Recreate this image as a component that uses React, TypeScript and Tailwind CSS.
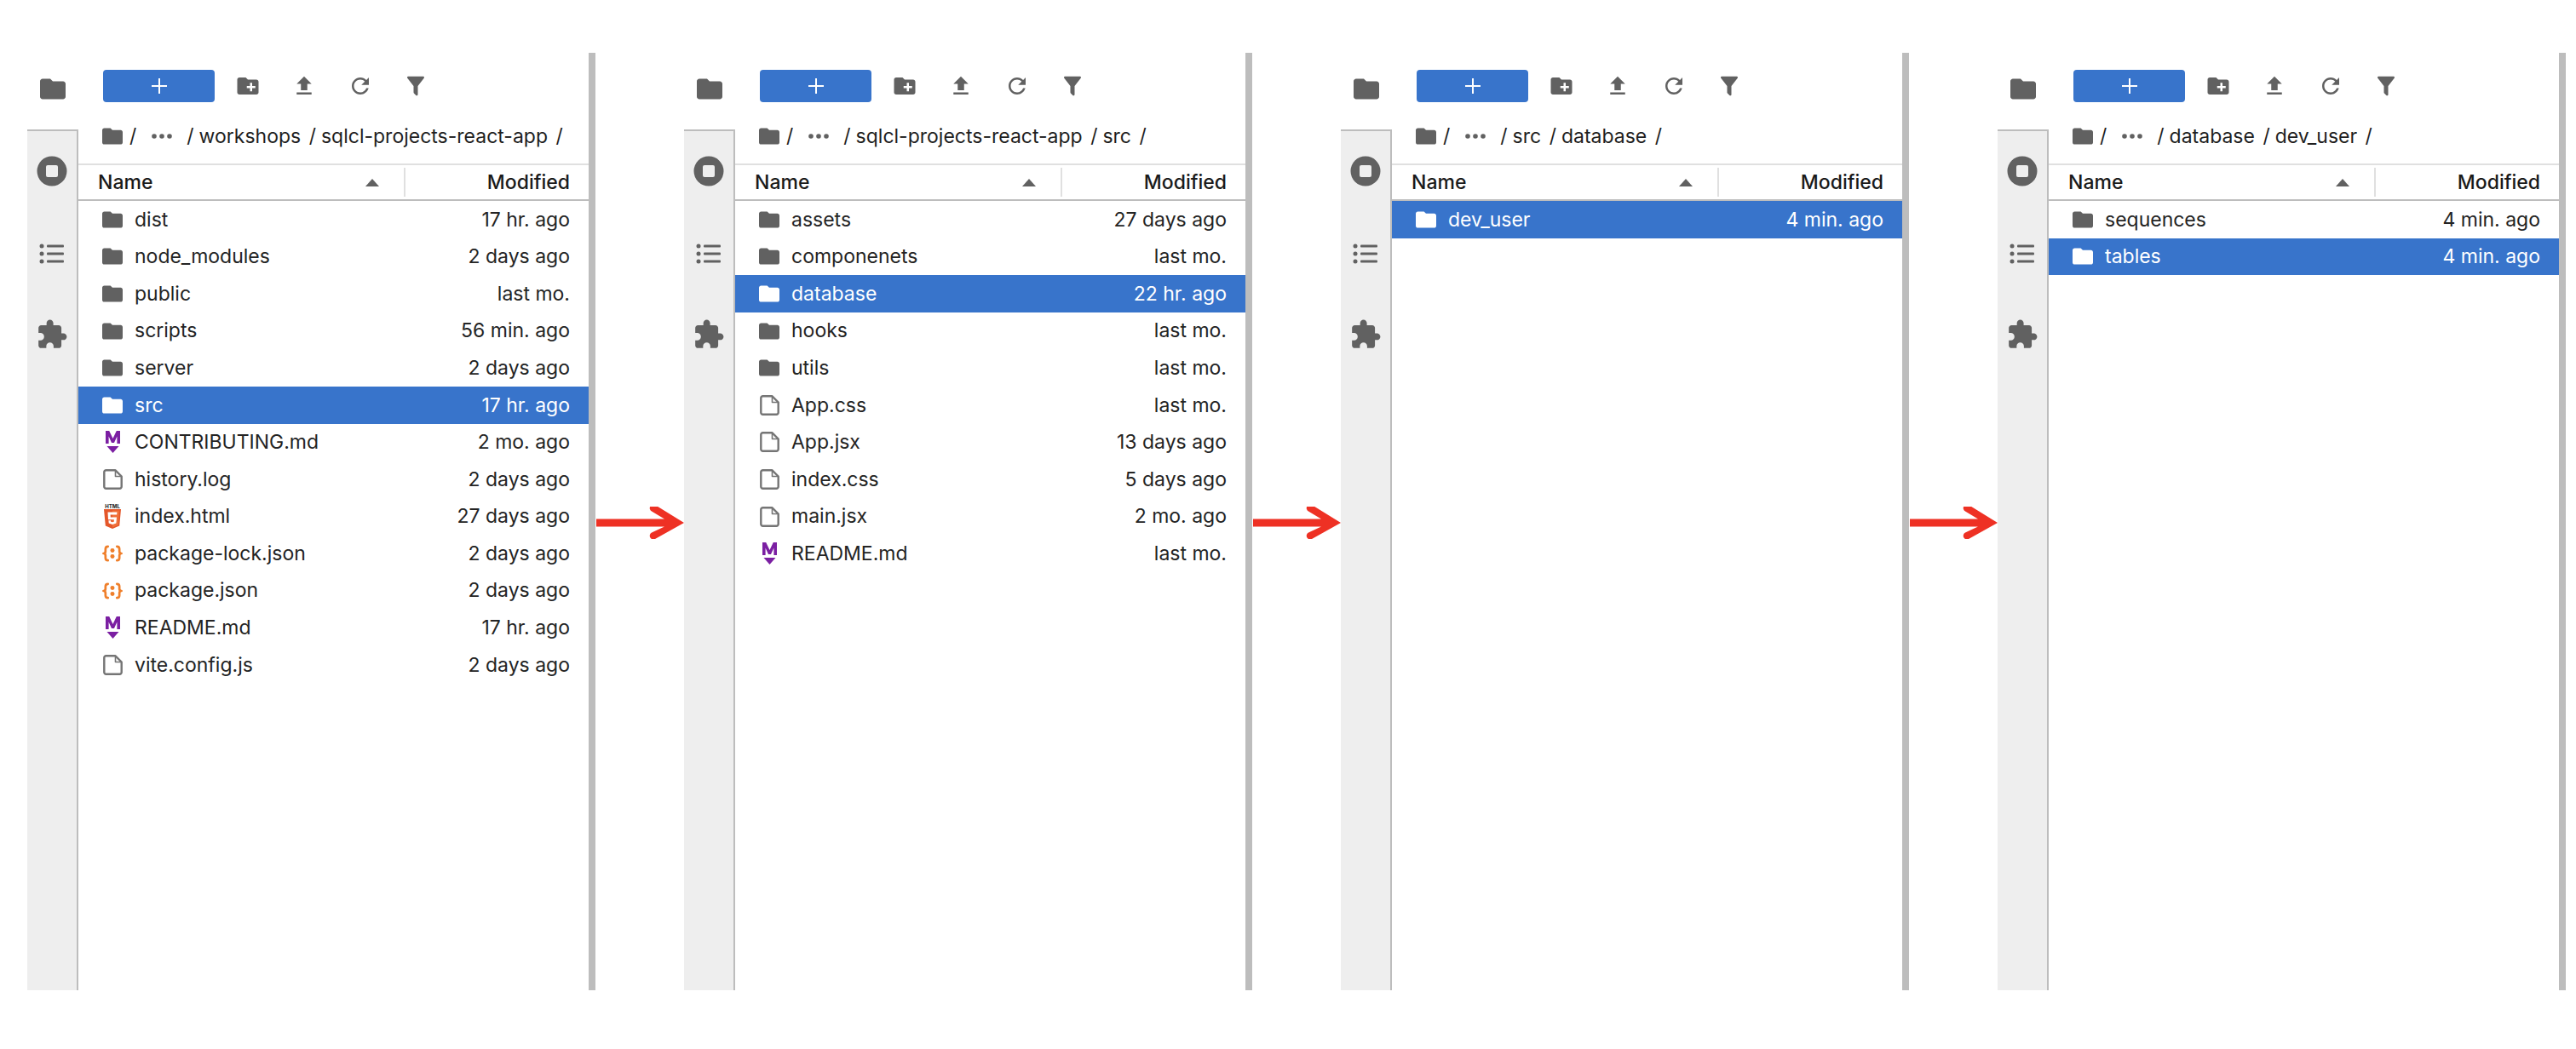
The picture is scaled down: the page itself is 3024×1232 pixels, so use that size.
import React from "react";

type Kind = "folder" | "file" | "md" | "html" | "json";
type Row = { name: string; modified: string; kind: Kind; selected?: boolean };
type Panel = { crumbs: string[]; rows: Row[] };

const panels: Panel[] = [
  {
    crumbs: ["workshops", "sqlcl-projects-react-app"],
    rows: [
      { name: "dist", modified: "17 hr. ago", kind: "folder" },
      { name: "node_modules", modified: "2 days ago", kind: "folder" },
      { name: "public", modified: "last mo.", kind: "folder" },
      { name: "scripts", modified: "56 min. ago", kind: "folder" },
      { name: "server", modified: "2 days ago", kind: "folder" },
      { name: "src", modified: "17 hr. ago", kind: "folder", selected: true },
      { name: "CONTRIBUTING.md", modified: "2 mo. ago", kind: "md" },
      { name: "history.log", modified: "2 days ago", kind: "file" },
      { name: "index.html", modified: "27 days ago", kind: "html" },
      { name: "package-lock.json", modified: "2 days ago", kind: "json" },
      { name: "package.json", modified: "2 days ago", kind: "json" },
      { name: "README.md", modified: "17 hr. ago", kind: "md" },
      { name: "vite.config.js", modified: "2 days ago", kind: "file" },
    ],
  },
  {
    crumbs: ["sqlcl-projects-react-app", "src"],
    rows: [
      { name: "assets", modified: "27 days ago", kind: "folder" },
      { name: "componenets", modified: "last mo.", kind: "folder" },
      { name: "database", modified: "22 hr. ago", kind: "folder", selected: true },
      { name: "hooks", modified: "last mo.", kind: "folder" },
      { name: "utils", modified: "last mo.", kind: "folder" },
      { name: "App.css", modified: "last mo.", kind: "file" },
      { name: "App.jsx", modified: "13 days ago", kind: "file" },
      { name: "index.css", modified: "5 days ago", kind: "file" },
      { name: "main.jsx", modified: "2 mo. ago", kind: "file" },
      { name: "README.md", modified: "last mo.", kind: "md" },
    ],
  },
  {
    crumbs: ["src", "database"],
    rows: [{ name: "dev_user", modified: "4 min. ago", kind: "folder", selected: true }],
  },
  {
    crumbs: ["database", "dev_user"],
    rows: [
      { name: "sequences", modified: "4 min. ago", kind: "folder" },
      { name: "tables", modified: "4 min. ago", kind: "folder", selected: true },
    ],
  },
];

const FOLDER = "M10 4H4c-1.1 0-2 .9-2 2v12c0 1.1.9 2 2 2h16c1.1 0 2-.9 2-2V8c0-1.1-.9-2-2-2h-8l-2-2z";

const FolderIcon = ({ className }: { className: string }) => (
  <svg viewBox="2 4 20 16" className={className} fill="currentColor">
    <path d={FOLDER} />
  </svg>
);

const FileKindIcon = ({ kind, selected }: { kind: Kind; selected?: boolean }) => {
  if (kind === "folder") {
    return <FolderIcon className={`h-5 w-6 ${selected ? "text-white" : "text-[#616161]"}`} />;
  }
  if (kind === "file") {
    return (
      <svg viewBox="0 0 23 24" className="h-6 w-[23px] text-[#757575]" fill="none" stroke="currentColor" strokeWidth="2.4" strokeLinejoin="round">
        <path d="M3.500 1.300H14.500L21.700 8.500V20.500a2.200 2.200 0 0 1-2.200 2.200H3.500a2.200 2.200 0 0 1-2.200-2.200V3.500a2.200 2.200 0 0 1 2.200-2.200z" />
        <path d="M14.500 1.300V8.500H21.700" strokeWidth="1.600" />
      </svg>
    );
  }
  if (kind === "md") {
    return (
      <svg viewBox="0 0 17 26" className="h-[26px] w-[17px] text-[#7B1FA2]" fill="currentColor">
        <path d="M0 0h4.200L8.500 9 12.800 0H17v15h-3.600V6.500L10 14H7L3.600 6.500V15H0z" />
        <path d="M1.500 18h14L8.500 26z" />
      </svg>
    );
  }
  if (kind === "html") {
    return (
      <svg viewBox="0 0 20 29" className="h-[29px] w-5">
        <text x="10" y="4.600" textAnchor="middle" fontSize="6" fontWeight="800" fontFamily="Inter, sans-serif" fill="#333">
          HTML
        </text>
        <path d="M0 6h20l-1.800 19.500L10 29l-8.200-3.500z" fill="#E4572A" />
        <path d="M10 7.500h8.300l-1.500 17L10 27.400z" fill="#F0703A" />
        <path d="M4.500 9.500h11l-.3 3H7.600l.2 3h7.200l-.6 7L10 24l-4.300-1.500-.3-3.300h2.700l.1 1.500 1.800.5 1.800-.5.2-2.400H5z" fill="#fff" />
      </svg>
    );
  }
  return (
    <svg viewBox="0 0 25 20" className="h-5 w-[25px] text-[#EF7F2B]" fill="none" stroke="currentColor" strokeWidth="2.800" strokeLinecap="round" strokeLinejoin="round">
      <path d="M7 1.500C4.500 1.500 4 2.500 4 4.500v3c0 1.500-.8 2.500-2.500 2.500C3.200 10 4 11 4 12.500v3c0 2 .5 3 3 3" />
      <path d="M18 1.500c2.500 0 3 1 3 3v3c0 1.500.8 2.500 2.500 2.500-1.700 0-2.500 1-2.500 2.500v3c0 2-.5 3-3 3" />
      <circle cx="12.500" cy="6.300" r="2.600" fill="currentColor" stroke="none" />
      <circle cx="12.500" cy="13.700" r="2.600" fill="currentColor" stroke="none" />
    </svg>
  );
};

const ToolIcon = ({ d, className }: { d: string; className: string }) => (
  <svg viewBox="0 0 24 24" className={className} fill="#616161">
    <path d={d} />
  </svg>
);

const FilePanel = ({ panel }: { panel: Panel }) => (
  <div className="flex h-full w-[667px] shrink-0">
    {/* Left rail */}
    <div className="flex w-[60px] shrink-0 flex-col">
      <div className="flex h-[90px] items-start justify-center pt-[30px]">
        <FolderIcon className="h-[25px] w-[30px] text-[#616161]" />
      </div>
      <div className="flex flex-1 flex-col items-center border-t-2 border-r-2 border-[#bdbdbd] bg-[#eeeeee]">
        <svg viewBox="0 0 36 36" className="mt-[29px] size-9" fill="#616161" fillRule="evenodd">
          <path d="M18 .500a17.500 17.500 0 1 0 0 35 17.500 17.500 0 0 0 0-35zM13 11h10a2 2 0 0 1 2 2v10a2 2 0 0 1-2 2H13a2 2 0 0 1-2-2V13a2 2 0 0 1 2-2z" />
        </svg>
        <svg viewBox="0 0 30 24" className="mt-[67px] h-6 w-[30px]" fill="#616161">
          <circle cx="3" cy="3" r="2.500" />
          <circle cx="3" cy="12" r="2.500" />
          <circle cx="3" cy="21" r="2.500" />
          <rect x="9" y="1.500" width="20" height="3" rx="1" />
          <rect x="9" y="10.500" width="20" height="3" rx="1" />
          <rect x="9" y="19.500" width="20" height="3" rx="1" />
        </svg>
        <svg viewBox="0 0 24 24" className="mt-[64px] size-[38px]" fill="#616161">
          <path d="M20.500 11H19V7c0-1.100-.9-2-2-2h-4V3.500C13 2.120 11.880 1 10.500 1S8 2.120 8 3.500V5H4c-1.100 0-1.990.9-1.990 2v3.800H3.500c1.490 0 2.700 1.210 2.700 2.700s-1.210 2.700-2.700 2.700H2V20c0 1.100.9 2 2 2h3.800v-1.500c0-1.490 1.210-2.700 2.700-2.700 1.490 0 2.700 1.210 2.700 2.700V22H17c1.100 0 2-.9 2-2v-4h1.500c1.380 0 2.500-1.120 2.500-2.500S21.880 11 20.500 11z" />
        </svg>
      </div>
    </div>

    {/* Browser */}
    <div className="flex min-w-0 flex-1 flex-col">
      <div className="flex h-[78px] items-start pl-[29px] pt-5">
        <div className="flex h-[38px] w-[131px] items-center justify-center rounded-[4px] bg-[#3874CB]">
          <svg viewBox="0 0 18 18" className="size-[18px]" stroke="#fff" strokeWidth="2">
            <path d="M9 0v18M0 9h18" />
          </svg>
        </div>
        <ToolIcon className="ml-[24px] mt-[4px] size-[30px]" d="M20 6h-8l-2-2H4c-1.110 0-1.990.89-1.990 2L2 18c0 1.110.89 2 2 2h16c1.110 0 2-.89 2-2V8c0-1.110-.89-2-2-2zm-1 8h-3v3h-2v-3h-3v-2h3V9h2v3h3v2z" />
        <ToolIcon className="ml-[36px] mt-[4px] size-[30px]" d="M9 16h6v-6h4l-7-7-7 7h4zm-4 2h14v2H5z" />
        <ToolIcon className="ml-[36px] mt-[4px] size-[30px]" d="M17.650 6.350C16.200 4.900 14.210 4 12 4c-4.420 0-7.990 3.580-7.990 8s3.570 8 7.990 8c3.730 0 6.840-2.550 7.730-6h-2.080c-.82 2.330-3.040 4-5.650 4-3.310 0-6-2.690-6-6s2.690-6 6-6c1.660 0 3.140.69 4.220 1.780L13 11h7V4l-2.350 2.350z" />
        <ToolIcon className="ml-[35px] mt-[4px] size-[30px]" d="M14,12V19.880C14.040,20.180 13.940,20.500 13.710,20.710C13.320,21.100 12.690,21.100 12.300,20.710L10.290,18.700C10.060,18.470 9.960,18.160 10,17.870V12H9.970L4.210,4.620C3.870,4.190 3.950,3.560 4.380,3.220C4.570,3.080 4.780,3 5,3V3H19V3C19.220,3 19.430,3.080 19.620,3.220C20.050,3.560 20.130,4.190 19.790,4.620L14.030,12H14Z" />
      </div>

      {/* Breadcrumbs */}
      <div className="flex h-10 items-center pl-7 text-[23px] text-[#1f1f1f]">
        <FolderIcon className="h-5 w-6 text-[#616161]" />
        <span className="ml-[8px]">/</span>
        <svg viewBox="0 0 24 6" className="ml-[18px] mr-[17px] h-[6px] w-6" fill="#616161">
          <circle cx="3" cy="3" r="2.800" />
          <circle cx="12" cy="3" r="2.800" />
          <circle cx="21" cy="3" r="2.800" />
        </svg>
        <span>/</span>
        {panel.crumbs.map((crumb) => (
          <span key={crumb} className="ml-[6px]">
            {crumb} <span className="ml-[3px]">/</span>
          </span>
        ))}
      </div>

      {/* Column header */}
      <div className="mt-3 flex h-[44px] items-center border-y-2 border-t-[#e0e0e0] border-b-[#bdbdbd] text-[23px] font-medium text-[#1a1a1a]">
        <div className="flex h-[34px] w-[384px] items-center justify-between border-r-2 border-[#e0e0e0] pl-[23px] pr-[29px]">
          <span>Name</span>
          <svg viewBox="0 0 16 9" className="h-[9px] w-4" fill="#616161">
            <path d="M8 0l8 9H0z" />
          </svg>
        </div>
        <div className="flex-1 pr-[22px] text-right">Modified</div>
      </div>

      {/* Rows */}
      {panel.rows.map((row) => (
        <div
          key={row.name}
          className={`flex h-[43.6px] items-center justify-between pl-7 pr-[22px] text-[23px] ${
            row.selected ? "bg-[#3874CB] text-white" : "text-[#242424]"
          }`}
        >
          <div className="flex items-center gap-[14px]">
            <div className="flex w-6 items-center justify-center">
              <FileKindIcon kind={row.kind} selected={row.selected} />
            </div>
            <span>{row.name}</span>
          </div>
          <span>{row.modified}</span>
        </div>
      ))}
    </div>

    {/* Scrollbar */}
    <div className="w-2 shrink-0 bg-[#bdbdbd]" />
  </div>
);

const Arrow = () => (
  <div className="flex w-[104px] shrink-0 items-center pt-[2px]">
    <svg viewBox="0 0 104 38" className="h-[38px] w-[104px]" fill="#EE3124">
      <path d="M1 14.500h80l-15-9a4 4 0 0 1 4-7.500L104 19 70 38a4 4 0 0 1-4-7.500l15-7H1z" />
    </svg>
  </div>
);

export default function App() {
  return (
    <div className="h-[1232px] w-[3024px] overflow-hidden bg-white pl-8 pt-[62px] font-['Inter',sans-serif]">
      <div className="flex h-[1101px]">
        {panels.map((panel, i) => (
          <React.Fragment key={i}>
            <FilePanel panel={panel} />
            {i < panels.length - 1 && <Arrow />}
          </React.Fragment>
        ))}
      </div>
    </div>
  );
}
